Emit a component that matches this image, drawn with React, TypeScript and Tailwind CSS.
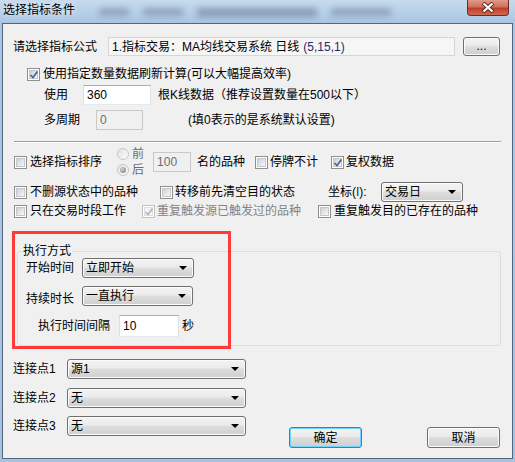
import React from "react";

const btnBg =
  "bg-[linear-gradient(#f3f3f3,#ebebeb_45%,#dddddd_50%,#cfcfcf)] shadow-[inset_0_0_0_1px_#fbfbfb]";

function Check({ checked = false, disabled = false }: { checked?: boolean; disabled?: boolean }) {
  return (
    <span
      className={`relative flex h-[13px] w-[13px] shrink-0 border bg-white p-[1px] ${
        disabled ? "border-[#c2c2c2]" : "border-[#8e8f8f]"
      }`}
    >
      <span
        className={`h-full w-full border ${
          disabled
            ? "border-[#dedede] bg-[#f4f4f4]"
            : "border-[#c4c7cc] bg-[linear-gradient(135deg,#cdd0d5,#f7f7f7)]"
        }`}
      />
      {checked && (
        <svg className="absolute left-[1px] top-[1px]" width="10" height="10" viewBox="0 0 10 10">
          <path
            d="M1.5 5L4 7.5L8.5 1.5"
            fill="none"
            stroke={disabled ? "#b4b4b4" : "#4a5f97"}
            strokeWidth="1.7"
          />
        </svg>
      )}
    </span>
  );
}

function Radio({ checked = false }: { checked?: boolean }) {
  return (
    <span className="flex h-[12px] w-[12px] shrink-0 items-center justify-center rounded-full border border-[#c5c5c5] bg-[linear-gradient(135deg,#e3e3e3,#fbfbfb)]">
      {checked && (
        <span className="h-[6px] w-[6px] rounded-full bg-[radial-gradient(circle_at_35%_35%,#d0d0d0,#7a7a7a)]" />
      )}
    </span>
  );
}

function Combo({ className, text }: { className: string; text: string }) {
  return (
    <div
      className={`flex items-center justify-between rounded-[3px] border border-[#707070] pl-[3px] pr-[6px] ${btnBg} ${className}`}
    >
      <span>{text}</span>
      <svg width="8" height="4" viewBox="0 0 8 4">
        <path d="M0 0H8L4 4Z" fill="#000" />
      </svg>
    </div>
  );
}

function Edit({ className, text, disabled = false }: { className: string; text: string; disabled?: boolean }) {
  return (
    <div
      className={`flex items-center border pl-[3px] ${
        disabled
          ? "border-[#c9c9c9] bg-[#f0f0f0] text-[#6d6d6d]"
          : "border-[#dbdfe6] border-t-[#abadb3] border-b-[#e3e9ef] bg-white"
      } ${className}`}
    >
      {text}
    </div>
  );
}

export default function App() {
  return (
    <div className="h-[462px] w-[515px] overflow-hidden bg-[linear-gradient(to_bottom,#c7dbef,#abc6e3_22px,#a8c2df)] px-[2px] pb-[3px] font-['Liberation_Sans','Noto_Sans_CJK_SC',sans-serif] text-[12px] leading-[14px] text-black">
      {/* title bar */}
      <div className="flex h-[23px] items-start">
        <span className="pl-[1px] pt-[3px] [text-shadow:0_0_6px_#ffffff]">选择指标条件</span>
        <div className="ml-[24px] mt-[8px] flex flex-1 gap-[14px] opacity-40 blur-[3px]">
          <span className="h-[8px] w-[30px] bg-[#55677d]" />
          <span className="h-[8px] w-[40px] bg-[#55677d]" />
          <span className="h-[9px] w-[120px] bg-[#44566c]" />
          <span className="h-[8px] w-[60px] bg-[#55677d]" />
        </div>
        <div className="mr-[4px] flex h-[16px] w-[42px] items-center justify-center rounded-b-[4px] border border-t-0 border-[#6b2d24] bg-[linear-gradient(#e29a8c,#d0705c_45%,#bf3f29_55%,#cd6a52)]">
          <svg width="14" height="11" viewBox="0 0 14 11">
            <path d="M2 1L12 10M12 1L2 10" stroke="#5a2a22" strokeWidth="4" />
            <path d="M2.5 1.5L11.5 9.5M11.5 1.5L2.5 9.5" stroke="#ffffff" strokeWidth="2.2" />
          </svg>
        </div>
      </div>

      {/* client area */}
      <div className="h-[436px] border border-[#52657c] bg-[#f0f0f0] pl-[10px] pt-[13px]">
        <div className="flex h-[19px] items-center">
          <span className="w-[95px]">请选择指标公式</span>
          <div className="flex h-[19px] w-[347px] items-center border border-[#d6d6d6] bg-[#f6f6f6] pl-[3px]">
            1.指标交易：MA均线交易系统 日线 <span className="ml-[4px] text-[#1f2a66]">(5,15,1)</span>
          </div>
          <div
            className={`ml-[8px] flex h-[19px] w-[37px] items-end justify-center rounded-[3px] border border-[#707070] pb-[2px] ${btnBg}`}
          >
            ...
          </div>
        </div>

        <div className="mt-[10px] flex h-[16px] items-center pl-[14px]">
          <Check checked />
          <span className="ml-[3px]">使用指定数量数据刷新计算(可以大幅提高效率)</span>
        </div>

        <div className="mt-[3px] flex h-[20px] items-center">
          <span className="ml-[31px] w-[39px]">使用</span>
          <Edit className="h-[20px] w-[68px]" text="360" />
          <span className="ml-[7px]">根K线数据（推荐设置数量在500以下）</span>
        </div>

        <div className="mt-[5px] flex h-[20px] items-center">
          <span className="ml-[31px] w-[52px]">多周期</span>
          <Edit className="h-[20px] w-[47px]" text="0" disabled />
          <span className="ml-[45px]">(填0表示的是系统默认设置)</span>
        </div>

        <div className="ml-[1px] mt-[11px] h-[2px] w-[487px] border-b border-t border-b-white border-t-[#a0a0a0]" />

        <div className="mt-[4px] flex h-[30px] items-center">
          <span className="ml-[1px]">
            <Check />
          </span>
          <span className="ml-[3px]">选择指标排序</span>
          <div className="ml-[15px] flex flex-col text-[#6d6d6d]">
            <div className="flex h-[14px] items-center">
              <Radio />
              <span className="ml-[3px]">前</span>
            </div>
            <div className="mt-[2px] flex h-[14px] items-center">
              <Radio checked />
              <span className="ml-[3px]">后</span>
            </div>
          </div>
          <Edit className="ml-[9px] h-[20px] w-[38px]" text="100" disabled />
          <span className="ml-[6px]">名的品种</span>
          <span className="ml-[10px]">
            <Check />
          </span>
          <span className="ml-[2px]">停牌不计</span>
          <span className="ml-[13px]">
            <Check checked />
          </span>
          <span className="ml-[2px]">复权数据</span>
        </div>

        <div className="mt-[5px] flex h-[20px] items-center">
          <span className="ml-[1px]">
            <Check />
          </span>
          <span className="ml-[3px] w-[130px]">不删源状态中的品种</span>
          <Check />
          <span className="ml-[2px] w-[153px]">转移前先清空目的状态</span>
          <span className="w-[53px]">
            坐标(<span className="text-[#1f2a66]">I</span>):
          </span>
          <Combo className="h-[20px] w-[82px]" text="交易日" />
        </div>

        <div className="mt-[2px] flex h-[14px] items-center">
          <span className="ml-[1px]">
            <Check />
          </span>
          <span className="ml-[3px] w-[112px]">只在交易时段工作</span>
          <Check checked disabled />
          <span className="ml-[2px] w-[161px] text-[#838383]">重复触发源已触发过的品种</span>
          <Check />
          <span className="ml-[3px]">重复触发目的已存在的品种</span>
        </div>

        {/* group box */}
        <div className="relative ml-[4px] mt-[26px] w-[484px]">
          <fieldset className="h-[102px] rounded-[3px] border border-[#d5dfe5]">
            <legend className="ml-[4px] px-[1px] leading-[14px]">执行方式</legend>
            <div className="ml-[8px] flex h-[20px] items-center">
              <span className="w-[56px]">开始时间</span>
              <Combo className="h-[20px] w-[112px]" text="立即开始" />
            </div>
            <div className="ml-[8px] mt-[8px] flex h-[20px]">
              <span className="w-[56px] self-end">持续时长</span>
              <Combo className="h-[20px] w-[111px]" text="一直执行" />
            </div>
            <div className="ml-[20px] mt-[9px] flex h-[22px] items-center">
              <span className="w-[81px]">执行时间间隔</span>
              <Edit className="h-[22px] w-[60px]" text="10" />
              <span className="ml-[3px]">秒</span>
            </div>
          </fieldset>
          <div className="pointer-events-none absolute left-[-5px] top-[-13px] h-[118px] w-[219px] border-[3px] border-[#ff3a3a]" />
        </div>

        <div className="mt-[13px] flex h-[20px] items-center">
          <span className="w-[54px]">连接点1</span>
          <Combo className="h-[20px] w-[179px]" text="源1" />
        </div>
        <div className="mt-[9px] flex h-[20px] items-center">
          <span className="w-[54px]">连接点2</span>
          <Combo className="h-[20px] w-[179px]" text="无" />
        </div>
        <div className="mt-[8px] flex items-start">
          <span className="flex h-[20px] w-[54px] items-center">连接点3</span>
          <Combo className="h-[20px] w-[179px]" text="无" />
          <div className="ml-[43px] mt-[11px] flex h-[21px] w-[73px] items-center justify-center rounded-[3px] border border-[#3c7fb1] bg-[linear-gradient(#f3f3f3,#ebebeb_45%,#dddddd_50%,#cfcfcf)] shadow-[inset_0_0_0_1px_#6fd3fb]">
            确定
          </div>
          <div
            className={`ml-[65px] mt-[11px] flex h-[21px] w-[73px] items-center justify-center rounded-[3px] border border-[#707070] ${btnBg}`}
          >
            取消
          </div>
        </div>
      </div>
    </div>
  );
}
